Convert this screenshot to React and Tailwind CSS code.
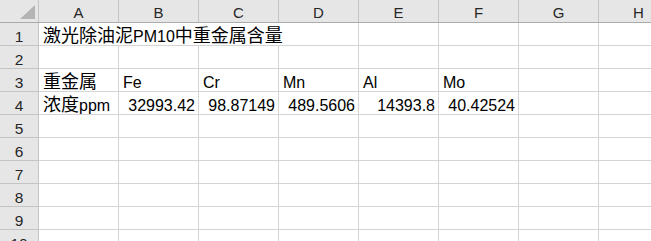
// split text so CJK runs can get a slightly larger size than latin text
function Mixed({ text }) {
  const parts = text.match(/[\u3400-\u9fff]+|[^\u3400-\u9fff]+/g) || [];
  return parts.map((p, i) =>
    /[\u3400-\u9fff]/.test(p) ? (
      <span key={i} className="text-[18px] leading-[16px]">
        {p}
      </span>
    ) : (
      <span key={i}>{p}</span>
    )
  );
}

export default function App() {
  const cols = ['A', 'B', 'C', 'D', 'E', 'F', 'G', 'H'];
  const blank = ['', '', '', '', '', '', '', ''];
  const rows = [
    [{ v: '激光除油泥PM10中重金属含量', span: 4 }, null, null, null, '', '', '', ''],
    blank,
    ['重金属', 'Fe', 'Cr', 'Mn', 'Al', 'Mo', '', ''],
    ['浓度ppm', { v: '32993.42', num: true }, { v: '98.87149', num: true }, { v: '489.5606', num: true }, { v: '14393.8', num: true }, { v: '40.42524', num: true }, '', ''],
    blank,
    blank,
    blank,
    blank,
    blank,
    blank,
  ];

  return (
    <div
      className="w-[651px] h-[241px] overflow-hidden bg-white text-black"
      style={{ fontFamily: '"Liberation Sans", "Noto Sans CJK SC", sans-serif' }}
    >
      {/* column headers */}
      <div className="flex h-[23px] bg-[#e6e6e6] border-b border-[#ababab] text-[15px]">
        <div className="relative w-[39px] shrink-0 border-r border-[#c4c4c4]">
          <svg className="absolute right-[3px] bottom-[3px]" width="15" height="14" viewBox="0 0 15 14">
            <polygon points="15,0 15,14 0,14" fill="#b4b4b4" />
          </svg>
        </div>
        {cols.map((c) => (
          <div
            key={c}
            className="w-[80px] shrink-0 border-r border-[#c4c4c4] flex items-center justify-center pt-[4px] text-[#262626] leading-[16px]"
          >
            {c}
          </div>
        ))}
      </div>

      {rows.map((r, i) => (
        <div key={i} className="flex h-[23px]">
          <div className="w-[39px] shrink-0 bg-[#e6e6e6] border-r border-b border-[#c4c4c4] flex items-end justify-center text-[15.5px] text-[#262626] leading-[16px]">
            {i + 1}
          </div>
          {r.map((cell, j) => {
            if (cell === null) return null;
            const obj = typeof cell === 'string' ? { v: cell } : cell;
            const w = obj.span ? 'w-[320px]' : 'w-[80px]';
            return (
              <div
                key={j}
                className={`${w} shrink-0 border-r border-b border-[#d4d4d4] flex items-end whitespace-nowrap text-[16px] leading-[16px] ${
                  obj.num ? 'justify-end pr-[3px]' : 'pl-[4px]'
                }`}
              >
                <div>
                  <Mixed text={obj.v} />
                </div>
              </div>
            );
          })}
        </div>
      ))}
    </div>
  );
}
